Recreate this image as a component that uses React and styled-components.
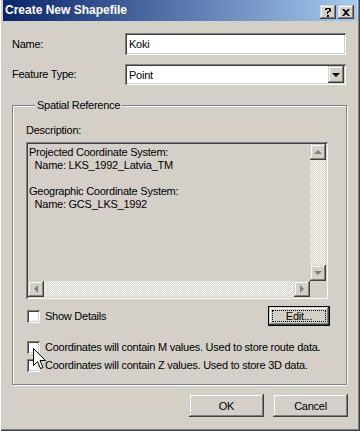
import React from "react";
import styled, { createGlobalStyle } from "styled-components";

const Global = createGlobalStyle`
  html, body { margin: 0; padding: 0; background: #d4d0c8; }
  body { font-family: "Liberation Sans", Arial, sans-serif; font-size: 11px; color: #000; }
  * { box-sizing: border-box; }
`;

const raised = `
  background: #d4d0c8;
  box-shadow: inset -1px -1px 0 #404040, inset 1px 1px 0 #d4d0c8,
    inset -2px -2px 0 #808080, inset 2px 2px 0 #ffffff;
`;

const sunken = `
  box-shadow: inset 1px 1px 0 #808080, inset -1px -1px 0 #ffffff,
    inset 2px 2px 0 #404040, inset -2px -2px 0 #d4d0c8;
`;

const Window = styled.div`
  position: relative;
  width: 360px;
  height: 431px;
  background: #d4d0c8;
  padding: 0 3px 3px 3px;
  display: flex;
  flex-direction: column;
  box-shadow: inset 1px 0 0 #ffffff, inset -1px -1px 0 #404040,
    inset -2px -2px 0 #808080;
  letter-spacing: -0.25px;
`;

const TitleBar = styled.div`
  height: 21px;
  flex: none;
  display: flex;
  align-items: flex-start;
  padding: 0 3px 0 2px;
  background: linear-gradient(to right, #0a246a, #a6caf0);
`;

const TitleText = styled.div`
  flex: 1;
  color: #fff;
  font-weight: bold;
  font-size: 12px;
  line-height: 21px;
  letter-spacing: 0;
`;

const TitleButton = styled.div`
  ${raised}
  width: 16px;
  height: 14px;
  margin-top: 5px;
  margin-left: ${(p) => (p.$gap ? "2px" : "0")};
  display: flex;
  align-items: center;
  justify-content: center;
`;

const Body = styled.div`
  flex: 1;
  display: flex;
  flex-direction: column;
  padding: 12px 10px 0 9px;
`;

const FormGrid = styled.div`
  display: grid;
  grid-template-columns: 113px 221px;
  row-gap: 9px;
  align-items: center;
`;

const Label = styled.div`
  line-height: 13px;
`;

const TextBox = styled.div`
  ${sunken}
  background: #fff;
  height: 22px;
  padding: 0 4px;
  line-height: 22px;
`;

const Combo = styled.div`
  ${sunken}
  background: #fff;
  height: 21px;
  display: flex;
  align-items: center;
  padding: 2px;
`;

const ComboText = styled.div`
  flex: 1;
  padding-left: 2px;
`;

const ArrowButton = styled.div`
  ${raised}
  width: ${(p) => p.$w || 16}px;
  height: ${(p) => p.$h || 16}px;
  flex: none;
  display: flex;
  align-items: center;
  justify-content: center;
`;

const Group = styled.fieldset`
  margin: 14px 0 0 0;
  padding: 0 17px 0 13px;
  border: 1px solid #808080;
  box-shadow: inset 1px 1px 0 #fff, 1px 1px 0 #fff;
  height: 286px;
  display: flex;
  flex-direction: column;
`;

const Legend = styled.legend`
  margin-left: 9px;
  padding: 0 2px;
  line-height: 13px;
  background: #d4d0c8;
`;

const DescLabel = styled.div`
  line-height: 13px;
  margin-top: 12px;
`;

const DescBox = styled.div`
  ${sunken}
  margin-top: 5px;
  width: 302px;
  height: 157px;
  padding: 2px;
  display: grid;
  grid-template-columns: 1fr 16px;
  grid-template-rows: 1fr 16px;
`;

const DescText = styled.div`
  white-space: pre;
  line-height: 13px;
  padding: 2px 0 0 1px;
  overflow: hidden;
`;

const track = `
  background: repeating-conic-gradient(#ffffff 0 25%, #d4d0c8 0 50%) 0 0 / 2px 2px;
`;

const VScroll = styled.div`
  display: flex;
  flex-direction: column;
`;

const HScroll = styled.div`
  display: flex;
`;

const Track = styled.div`
  flex: 1;
  ${track}
`;

const Corner = styled.div`
  background: #d4d0c8;
`;

const Row = styled.div`
  display: flex;
  align-items: flex-start;
  margin-top: ${(p) => p.$mt || 0}px;
`;

const CheckRow = styled.div`
  display: flex;
  align-items: center;
  height: 13px;
  flex: ${(p) => (p.$grow ? 1 : "none")};
  margin-top: ${(p) => p.$mt || 0}px;
`;

const Check = styled.div`
  ${sunken}
  background: #fff;
  width: 13px;
  height: 13px;
  flex: none;
  margin-left: 1px;
  margin-right: 5px;
`;

const CheckLabel = styled.div`
  line-height: 13px;
`;

const Button = styled.div`
  ${raised}
  width: ${(p) => p.$w}px;
  height: ${(p) => p.$h}px;
  display: flex;
  align-items: center;
  justify-content: center;
  margin-left: ${(p) => p.$ml || 0}px;
`;

const DefaultButton = styled.div`
  width: 62px;
  height: 20px;
  border: 1px solid #000;
  display: flex;
  margin-top: -2px;
  margin-right: -1px;
`;

const DefaultInner = styled.div`
  ${raised}
  flex: 1;
  padding: 3px;
  display: flex;
`;

const Focus = styled.div`
  flex: 1;
  border: 1px dotted #000;
  display: flex;
  align-items: center;
  justify-content: center;
  line-height: 11px;
`;

const Footer = styled.div`
  display: flex;
  justify-content: flex-end;
  margin-top: 9px;
  margin-right: -1px;
`;

const Cursor = styled.svg`
  position: absolute;
  left: 33px;
  top: 348px;
`;

const Tri = ({ dir, color = "#808080", size = 4 }) => {
  const s = size;
  let pts;
  if (dir === "up") pts = `0,${s} ${s},0 ${2 * s},${s}`;
  if (dir === "down") pts = `0,0 ${2 * s},0 ${s},${s}`;
  if (dir === "left") pts = `${s},0 ${s},${2 * s} 0,${s}`;
  if (dir === "right") pts = `0,0 ${s},${s} 0,${2 * s}`;
  const w = dir === "up" || dir === "down" ? 2 * s : s;
  const h = dir === "up" || dir === "down" ? s : 2 * s;
  return (
    <svg width={w} height={h} viewBox={`0 0 ${w} ${h}`}>
      <polygon points={pts} fill={color} />
    </svg>
  );
};

export default function App() {
  return (
    <>
      <Global />
      <Window>
        <TitleBar>
          <TitleText>Create New Shapefile</TitleText>
          <TitleButton>
            <svg width="8" height="9" viewBox="0 0 8 9">
              <path d="M1 1 L2 0 H6 L7 1 V3 L6 4 L5 4 L4 5 V6 H3 V4 L4 3 H5 V1 H3 V2 H1 Z" fill="#000" />
              <rect x="3" y="7" width="2" height="2" fill="#000" />
            </svg>
          </TitleButton>
          <TitleButton $gap>
            <svg width="8" height="7" viewBox="0 0 8 7">
              <path d="M0 0 H2 L4 2 L6 0 H8 L5 3.5 L8 7 H6 L4 5 L2 7 H0 L3 3.5 Z" fill="#000" />
            </svg>
          </TitleButton>
        </TitleBar>
        <Body>
          <FormGrid>
            <Label>Name:</Label>
            <TextBox>Koki</TextBox>
            <Label>Feature Type:</Label>
            <Combo>
              <ComboText>Point</ComboText>
              <ArrowButton $w={16} $h={17}>
                <Tri dir="down" color="#000" size={4} />
              </ArrowButton>
            </Combo>
          </FormGrid>
          <Group>
            <Legend>Spatial Reference</Legend>
            <DescLabel>Description:</DescLabel>
            <DescBox>
              <DescText>
                {"Projected Coordinate System:\n  Name: LKS_1992_Latvia_TM\n\nGeographic Coordinate System:\n  Name: GCS_LKS_1992"}
              </DescText>
              <VScroll>
                <ArrowButton>
                  <Tri dir="up" />
                </ArrowButton>
                <Track />
                <ArrowButton>
                  <Tri dir="down" />
                </ArrowButton>
              </VScroll>
              <HScroll>
                <ArrowButton>
                  <Tri dir="left" />
                </ArrowButton>
                <Track />
                <ArrowButton>
                  <Tri dir="right" />
                </ArrowButton>
              </HScroll>
              <Corner />
            </DescBox>
            <Row $mt={9}>
              <CheckRow $grow $mt={2}>
                <Check />
                <CheckLabel>Show Details</CheckLabel>
              </CheckRow>
              <DefaultButton>
                <DefaultInner>
                  <Focus>Edit...</Focus>
                </DefaultInner>
              </DefaultButton>
            </Row>
            <CheckRow $mt={15}>
              <Check />
              <CheckLabel>Coordinates will contain M values. Used to store route data.</CheckLabel>
            </CheckRow>
            <CheckRow $mt={5}>
              <Check />
              <CheckLabel>Coordinates will contain Z values. Used to store 3D data.</CheckLabel>
            </CheckRow>
          </Group>
          <Footer>
            <Button $w={75} $h={23}>OK</Button>
            <Button $w={75} $h={23} $ml={9}>Cancel</Button>
          </Footer>
        </Body>
        <Cursor width="13" height="21" viewBox="0 0 13 21">
          <path
            d="M0.5 0.5 L0.5 17.5 L4.5 13.5 L7.5 20.5 L10 19.5 L7 12.5 L12.5 12.5 Z"
            fill="#fff"
            stroke="#000"
            strokeWidth="1"
          />
        </Cursor>
      </Window>
    </>
  );
}
